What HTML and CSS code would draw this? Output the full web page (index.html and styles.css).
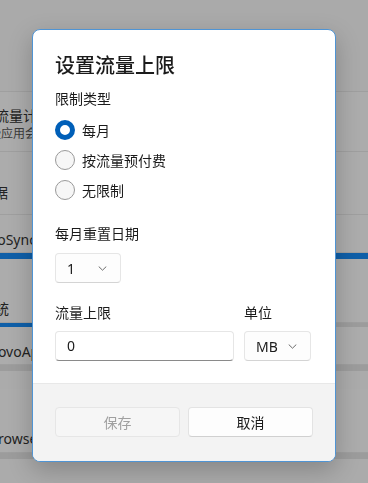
FILE: index.html
```html
<!DOCTYPE html>
<html>
<head>
    <title>设置流量上限</title>
    <link rel="stylesheet" href="styles.css">
</head>
<body>
    <div class="page">
        <div class="row row-top"></div>
        <div class="row row-meter">
            <div class="clip"><div class="row-title">流量计费</div></div>
            <div class="clip"><div class="row-sub">某些应用会以</div></div>
        </div>
        <div class="row row-plain">
            <div class="clip"><div class="row-title shift">数据</div></div>
        </div>
        <div class="row row-app">
            <div class="clip"><div class="row-title shift-app">LenovoSyncS</div></div>
        </div>
        <div class="usage"><div class="usage-fill" style="width: 100%"></div></div>
        <div class="row row-app tall">
            <div class="clip"><div class="row-title shift-sys">系统</div></div>
        </div>
        <div class="usage thin"><div class="usage-fill" style="width: 40%"></div></div>
        <div class="row row-app">
            <div class="clip"><div class="row-title shift-app2">LenovoAp</div></div>
        </div>
        <div class="usage gray"></div>
        <div class="row row-app tall">
            <div class="clip"><div class="row-title shift-br">Browser</div></div>
        </div>
        <div class="usage gray"></div>
    </div>

    <div class="scrim">
        <div class="dialog">
            <div class="dialog-body">
                <h1 class="dialog-title">设置流量上限</h1>

                <div class="label">限制类型</div>
                <div class="radios">
                    <div class="radio-row">
                        <span class="radio checked"></span>
                        <span>每月</span>
                    </div>
                    <div class="radio-row">
                        <span class="radio"></span>
                        <span>按流量预付费</span>
                    </div>
                    <div class="radio-row">
                        <span class="radio"></span>
                        <span>无限制</span>
                    </div>
                </div>

                <div class="label label-gap">每月重置日期</div>
                <div class="combo combo-day">
                    <span>1</span>
                    <svg class="chev" width="9" height="5" viewBox="0 0 9 5"><path d="M1 0.8l3.5 3.4 3.5-3.4" fill="none" stroke="#6a6a6a" stroke-width="1" stroke-linecap="round" stroke-linejoin="round"/></svg>
                </div>

                <div class="limit-grid">
                    <div class="label">流量上限</div>
                    <div class="label">单位</div>
                    <div class="textbox">0</div>
                    <div class="combo combo-unit">
                        <span>MB</span>
                        <svg class="chev" width="9" height="5" viewBox="0 0 9 5"><path d="M1 0.8l3.5 3.4 3.5-3.4" fill="none" stroke="#6a6a6a" stroke-width="1" stroke-linecap="round" stroke-linejoin="round"/></svg>
                    </div>
                </div>
            </div>
            <div class="dialog-footer">
                <button class="btn" disabled>保存</button>
                <button class="btn">取消</button>
            </div>
        </div>
    </div>
</body>
</html>
```

FILE: styles.css
```css
body {
    margin: 0;
    padding: 0;
    background-color: #ababab;
    color: #1b1b1b;
    font-family: "Noto Sans", "Noto Sans CJK SC", sans-serif;
    font-size: 14px;
    overflow: hidden;
}

/* page behind the dialog, already dimmed */
.page {
    display: flex;
    flex-direction: column;
    color: #222;
}

.row {
    border-bottom: 1px solid #9f9f9f;
    background-color: #acacac;
    white-space: nowrap;
    overflow: hidden;
}

/* only the strip left of the dialog shows */
.clip {
    width: 33px;
    overflow: hidden;
}

.row-top {
    height: 91px;
    background-color: #aaaaaa;
}

.row-meter {
    height: 60px;
    padding-top: 14px;
    box-sizing: border-box;
}

.row-meter .row-title {
    margin-left: -5px;
    line-height: 20px;
}

.row-sub {
    font-size: 12px;
    line-height: 16px;
    color: #3a3a3a;
    margin-left: -23px;
}

.row-plain {
    height: 63px;
    padding-top: 31px;
    box-sizing: border-box;
}

.row-app {
    height: 38px;
    padding-top: 15px;
    box-sizing: border-box;
}

.row-app.tall {
    height: 64px;
    padding-top: 40px;
}

.row-title {
    line-height: 20px;
}

.shift { margin-left: -20px; }
.shift-app { margin-left: -42px; }
.shift-sys { margin-left: -19px; }
.shift-app2 { margin-left: -26px; }
.shift-br { margin-left: -11px; }

.usage {
    height: 6px;
    background-color: #9c9c9c;
}

.usage.thin {
    height: 4px;
}

.usage.gray {
    height: 6px;
    margin-bottom: 18px;
}

.usage-fill {
    height: 100%;
    background-color: #0f5fa8;
}

/* dialog */
.scrim {
    position: fixed;
    top: 0;
    left: 0;
    width: 100%;
    height: 100%;
    display: flex;
    justify-content: center;
    align-items: flex-start;
    padding-top: 29px;
    box-sizing: border-box;
}

.dialog {
    width: 302px;
    background-color: #ffffff;
    border: 1px solid #4f94d4;
    border-radius: 8px;
    box-shadow: 0 8px 24px rgba(0, 0, 0, 0.22);
    overflow: hidden;
    font-family: "Noto Sans", "Noto Sans CJK SC", sans-serif;
}

.dialog-body {
    padding: 22px 22px 22px;
    display: flex;
    flex-direction: column;
}

.dialog-title {
    font-size: 20px;
    font-weight: 500;
    line-height: 28px;
    margin: 0 0 9px;
}

.label {
    line-height: 20px;
}

.label-gap {
    margin-top: 19px;
}

.radios {
    display: flex;
    flex-direction: column;
    margin-top: 6px;
}

.radio-row {
    display: flex;
    align-items: center;
    gap: 7px;
    height: 30px;
}

.radio {
    width: 20px;
    height: 20px;
    box-sizing: border-box;
    border-radius: 50%;
    border: 1px solid #999999;
    background-color: #f6f6f6;
    flex-shrink: 0;
}

.radio.checked {
    border: 5px solid #005fb8;
    background-color: #ffffff;
}

.combo {
    display: flex;
    align-items: center;
    justify-content: space-between;
    height: 30px;
    box-sizing: border-box;
    border: 1px solid #e6e6e6;
    border-bottom-color: #d4d4d4;
    border-radius: 4px;
    background-color: #fdfdfd;
    padding: 0 13px 0 11px;
}

.combo-day {
    width: 66px;
    margin-top: 9px;
}

.chev {
    display: block;
}

.limit-grid {
    display: grid;
    grid-template-columns: 179px 67px;
    column-gap: 10px;
    row-gap: 8px;
    margin-top: 20px;
}

.textbox {
    height: 30px;
    box-sizing: border-box;
    border: 1px solid #e6e6e6;
    border-bottom: 1px solid #8a8a8a;
    border-radius: 4px;
    background-color: #ffffff;
    padding: 0 11px;
    line-height: 28px;
}

.combo-unit {
    width: 67px;
}

.dialog-footer {
    background-color: #f3f3f3;
    border-top: 1px solid #e8e8e8;
    padding: 23px 22px 24px;
    display: flex;
    gap: 8px;
}

.btn {
    flex: 1;
    height: 30px;
    border: 1px solid #e3e3e3;
    border-bottom-color: #d0d0d0;
    border-radius: 4px;
    background-color: #fdfdfd;
    color: #1b1b1b;
    font-family: "Noto Sans", "Noto Sans CJK SC", sans-serif;
    font-size: 14px;
    padding: 0;
}

.btn:disabled {
    background-color: #f6f6f6;
    border-color: #e6e6e6;
    color: #a0a0a0;
}
```
